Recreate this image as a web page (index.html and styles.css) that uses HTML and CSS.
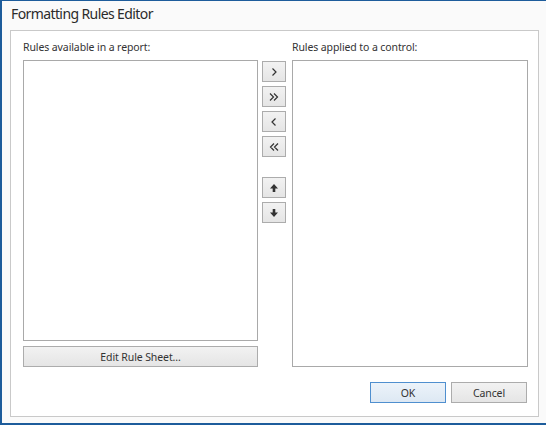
FILE: index.html
```html
<!DOCTYPE html>
<html>
<head>
  <meta charset="UTF-8">
  <title>Formatting Rules Editor</title>
  <link rel="stylesheet" href="styles.css">
</head>
<body>

<div class="window">
  <div class="title">Formatting Rules Editor</div>

  <div class="panel">
    <div class="columns">
      <div class="leftCol">
        <div class="label">Rules available in a report:</div>
        <div class="listBox leftList"></div>
        <button class="btn editBtn">Edit Rule Sheet...</button>
      </div>

      <div class="midCol">
        <button class="btn arrowBtn" title="Add">
          <svg width="10" height="10" viewBox="0 0 10 10"><path d="M3.5 1.5 L7 5 L3.5 8.5" fill="none" stroke="#333" stroke-width="1.2"/></svg>
        </button>
        <button class="btn arrowBtn" title="Add all">
          <svg width="12" height="10" viewBox="0 0 12 10"><path d="M2 1.5 L5.5 5 L2 8.5 M6 1.5 L9.5 5 L6 8.5" fill="none" stroke="#333" stroke-width="1.2"/></svg>
        </button>
        <button class="btn arrowBtn" title="Remove">
          <svg width="10" height="10" viewBox="0 0 10 10"><path d="M6.5 1.5 L3 5 L6.5 8.5" fill="none" stroke="#333" stroke-width="1.2"/></svg>
        </button>
        <button class="btn arrowBtn" title="Remove all">
          <svg width="12" height="10" viewBox="0 0 12 10"><path d="M6 1.5 L2.5 5 L6 8.5 M10 1.5 L6.5 5 L10 8.5" fill="none" stroke="#333" stroke-width="1.2"/></svg>
        </button>
        <button class="btn arrowBtn moveBtn" title="Move up">
          <svg width="10" height="10" viewBox="0 0 10 10"><path d="M5 1 L9 5.5 L6.3 5.5 L6.3 9 L3.7 9 L3.7 5.5 L1 5.5 Z" fill="#333"/></svg>
        </button>
        <button class="btn arrowBtn" title="Move down">
          <svg width="10" height="10" viewBox="0 0 10 10"><path d="M5 9 L9 4.5 L6.3 4.5 L6.3 1 L3.7 1 L3.7 4.5 L1 4.5 Z" fill="#333"/></svg>
        </button>
      </div>

      <div class="rightCol">
        <div class="label">Rules applied to a control:</div>
        <div class="listBox rightList"></div>
      </div>
    </div>

    <div class="footer">
      <button class="btn dlgBtn okBtn">OK</button>
      <button class="btn dlgBtn">Cancel</button>
    </div>
  </div>
</div>

</body>
</html>
```

FILE: styles.css
```css
body {
  margin: 0;
  background: #fafafa;
  color: #333;
  font-family: "Segoe UI", "Noto Sans", "Open Sans", sans-serif;
}

.window {
  width: 544px;
  height: 422px;
  background: #fafafa;
  border-top: 1px solid #1d5c9b;
  border-left: 2px solid #1d5c9b;
  border-bottom: 2px solid #1d5c9b;
}

.title {
  height: 29px;
  padding-left: 9px;
  font-size: 14px;
  letter-spacing: -0.6px;
  line-height: 26px;
  color: #2b2b2b;
}

.panel {
  width: 527px;
  height: 385px;
  margin-left: 8px;
  background: #fff;
  border: 1px solid #c9c9c9;
}

.columns {
  display: flex;
  padding: 0 0 0 12px;
}

.label {
  height: 29px;
  font-size: 10.5px;
  letter-spacing: -0.1px;
  line-height: 33px;
  color: #333;
}

.leftCol {
  width: 235px;
  display: flex;
  flex-direction: column;
}

.rightCol {
  width: 236px;
  margin-left: 6px;
}

.listBox {
  background: #fff;
  border: 1px solid #a9a9a9;
  box-sizing: border-box;
}

.leftList {
  height: 281px;
}

.rightList {
  height: 307px;
}

.btn {
  box-sizing: border-box;
  border: 1px solid #acacac;
  background: linear-gradient(#f2f2f2, #e5e5e5);
  font-family: inherit;
  color: #333;
  padding: 0;
  margin: 0;
}

.editBtn {
  height: 21px;
  margin-top: 5px;
  font-size: 10.5px;
  letter-spacing: -0.1px;
}

.midCol {
  width: 24px;
  margin-left: 4px;
  padding-top: 30px;
  display: flex;
  flex-direction: column;
  gap: 4px;
}

.arrowBtn {
  width: 24px;
  height: 21px;
  display: flex;
  align-items: center;
  justify-content: center;
}

.moveBtn {
  margin-top: 16px;
}

.footer {
  display: flex;
  justify-content: flex-end;
  gap: 5px;
  padding: 15px 11px 0 0;
}

.dlgBtn {
  width: 76px;
  height: 21px;
  font-size: 10.5px;
  letter-spacing: -0.1px;
}

.okBtn {
  border-color: #4f8fcf;
  background: linear-gradient(#ecf3fa, #dde8f3);
}
```
